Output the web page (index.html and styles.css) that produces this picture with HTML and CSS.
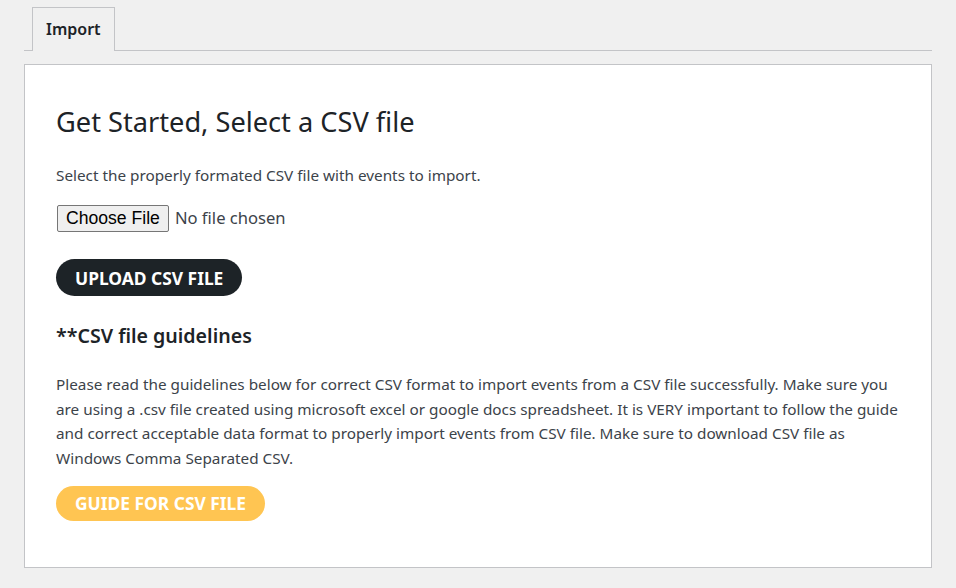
FILE: index.html
```html
<!DOCTYPE html>
<html>

<head>
    <title>Import Events</title>
    <link rel="stylesheet" href="styles.css">
</head>

<body>
    <div class="tab-bar">
        <a class="tab active">Import</a>
    </div>

    <div class="panel">
        <h1>Get Started, Select a CSV file</h1>
        <p class="intro">Select the properly formated CSV file with events to import.</p>

        <form class="upload-form">
            <input type="file" class="file-input" accept=".csv">
            <button type="button" class="btn btn-dark">UPLOAD CSV FILE</button>
        </form>

        <h2>**CSV file guidelines</h2>
        <p class="guide-text">Please read the guidelines below for correct CSV format to import events from a CSV file successfully. Make sure you are using a .csv file created using microsoft excel or google docs spreadsheet. It is VERY important to follow the guide and correct acceptable data format to properly import events from CSV file. Make sure to download CSV file as Windows Comma Separated CSV.</p>

        <button type="button" class="btn btn-yellow">GUIDE FOR CSV FILE</button>
    </div>
</body>

</html>
```

FILE: styles.css
```css
body {
    margin: 0;
    padding: 7px 24px 0;
    background-color: #f0f0f0;
    font-family: "Noto Sans", "Open Sans", sans-serif;
    color: #3c434a;
}

.tab-bar {
    display: flex;
    padding-left: 8px;
    border-bottom: 1px solid #c3c4c7;
    margin-bottom: 13px;
}

.tab {
    display: block;
    padding: 0 13px;
    height: 43px;
    line-height: 43px;
    border: 1px solid #c3c4c7;
    border-bottom: none;
    margin-bottom: -1px;
    background-color: #f0f0f0;
    color: #1d2327;
    font-size: 16px;
    font-weight: 600;
}

.panel {
    background-color: #fff;
    border: 1px solid #c3c4c7;
    padding: 36px 31px 46px;
}

h1 {
    margin: 0 0 22px;
    font-size: 27.2px;
    font-weight: 400;
    color: #1d2327;
    line-height: 42px;
}

.intro {
    margin: 0 0 20px;
    font-size: 15.3px;
    line-height: 20px;
}

.upload-form {
    display: flex;
    flex-direction: column;
    align-items: flex-start;
}

.file-input {
    font-family: "Noto Sans", "Open Sans", sans-serif;
    font-size: 16.6px;
    color: #3c434a;
    margin: 0 0 27px;
}

.file-input::file-selector-button {
    font-family: "Liberation Sans", Arial, sans-serif;
    font-size: 17.6px;
    color: #000;
    height: 27px;
    padding: 0 8px;
    margin: 0 6px 0 1px;
    background-color: #efefef;
    border: 1px solid #767676;
    border-radius: 2px;
}

.btn {
    font-family: "Noto Sans", "Open Sans", sans-serif;
    font-size: 17.4px;
    font-weight: 700;
    color: #fff;
    border: none;
    border-radius: 20px;
    padding: 0 19px;
    cursor: pointer;
}

.btn-dark {
    background-color: #1d2327;
    height: 37px;
}

.btn-yellow {
    background-color: #ffc552;
    height: 35px;
}

h2 {
    margin: 26px 0 22px;
    font-size: 19.6px;
    font-weight: 600;
    color: #1d2327;
    line-height: 28px;
}

.guide-text {
    margin: 0 0 15px;
    font-size: 15.3px;
    line-height: 24.7px;
}
```
